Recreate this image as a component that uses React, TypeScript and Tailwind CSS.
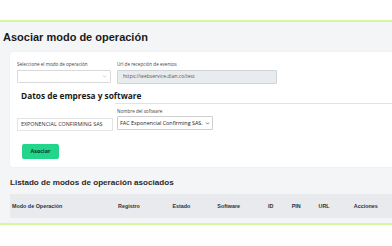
import { ChevronDown } from 'lucide-react';

const COLS = [
    { label: 'Modo de Operación', w: 'w-[111px]' },
    { label: 'Registro', w: 'w-[57px]' },
    { label: 'Estado', w: 'w-[47px]' },
    { label: 'Software', w: 'w-[53px]' },
    { label: 'ID', w: 'w-[25px]' },
    { label: 'PIN', w: 'w-[28px]' },
    { label: 'URL', w: 'w-[37px]' },
    { label: 'Acciones', w: 'w-[40px]' },
];

export default function App() {
    return (
        <div className="w-[392px] h-[246px] bg-white overflow-hidden" style={{ fontFamily: '"Open Sans", sans-serif' }}>
            <div className="h-[20px]" />
            <div className="h-[205px] bg-[#f4f5f7] border-t-2 border-b-2 border-[#d6f79a] flex flex-col">
                <h1 className="pl-[3px] pt-[7px] h-[30px] text-[11px] font-bold text-[#1a1a1a]" style={{ fontFamily: '"Liberation Sans", Arial, sans-serif' }}>
                    Asociar modo de operación
                </h1>
                <div className="ml-[10px] bg-white rounded-l-[3px] shadow-[0_0_2px_rgba(0,0,0,0.06)] h-[115px] pl-[7px] pt-[9px] flex flex-col">
                    <div className="flex gap-[6px]">
                        <div className="flex flex-col gap-[3px]">
                            <span className="text-[4.6px] text-[#444] leading-[6px]">Seleccione el modo de operación</span>
                            <div className="w-[94px] h-[13px] border border-[#d9d9d9] rounded-[1px] bg-white flex items-center justify-end pr-[3px]">
                                <ChevronDown size={5} strokeWidth={2} className="text-[#888]" />
                            </div>
                        </div>
                        <div className="flex flex-col gap-[3px]">
                            <span className="text-[4.6px] text-[#444] leading-[6px]">Url de recepción de eventos</span>
                            <div className="w-[160px] h-[14px] border border-[#d0d4d8] rounded-[1px] bg-[#e9ecef] flex items-center pl-[5px] text-[5px] text-[#555]">
                                https://webservice.dian.co/test
                            </div>
                        </div>
                    </div>
                    <div className="flex mt-[5px]">
                        <div className="w-[98px] flex flex-col">
                            <h2 className="pl-[4px] h-[14px] text-[8.3px] font-bold text-[#1a1a1a] whitespace-nowrap leading-[13px]">
                                Datos de empresa y software
                            </h2>
                            <div className="mt-[15px] w-[96px] h-[13px] border border-[#e4e4e4] flex items-center pl-[3px] text-[5.4px] text-[#333] whitespace-nowrap">
                                EXPONENCIAL CONFIRMING SAS
                            </div>
                        </div>
                        <div className="flex-1 flex flex-col">
                            <div className="h-[14px]" />
                            <div className="border-t border-[#e2e2e2] pt-[4px] pl-[2px] flex flex-col gap-[2px]">
                                <span className="text-[4.6px] text-[#444] leading-[6px]">Nombre del software</span>
                                <div className="w-[96px] h-[14px] border border-[#cfcfcf] rounded-[1px] flex items-center justify-between pl-[2px] pr-[2px] text-[5.4px] text-[#222] whitespace-nowrap">
                                    FAC Exponencial Confirming SAS.
                                    <ChevronDown size={5} strokeWidth={3} className="text-[#333]" />
                                </div>
                            </div>
                        </div>
                    </div>
                    <div className="mt-[13px] ml-[5px] w-[37px] h-[15px] rounded-[2px] bg-[#23d48b] flex items-center justify-center text-[5.4px] font-bold text-[#0f3b2a]">
                        Asociar
                    </div>
                </div>
                <h3 className="pl-[10px] pt-[10px] h-[27px] text-[8.1px] font-bold text-[#2a2a2a]" style={{ fontFamily: '"Liberation Sans", Arial, sans-serif' }}>
                    Listado de modos de operación asociados
                </h3>
                <div className="ml-[10px] h-[24px] bg-[#e8eaed] flex items-center pl-[2px]" style={{ fontFamily: '"Liberation Sans", Arial, sans-serif' }}>
                    {COLS.map(({ label, w }) => (
                        <span key={label} className={`${w} text-[5.4px] font-semibold text-[#333] whitespace-nowrap`}>
                            {label}
                        </span>
                    ))}
                </div>
            </div>
        </div>
    );
}
